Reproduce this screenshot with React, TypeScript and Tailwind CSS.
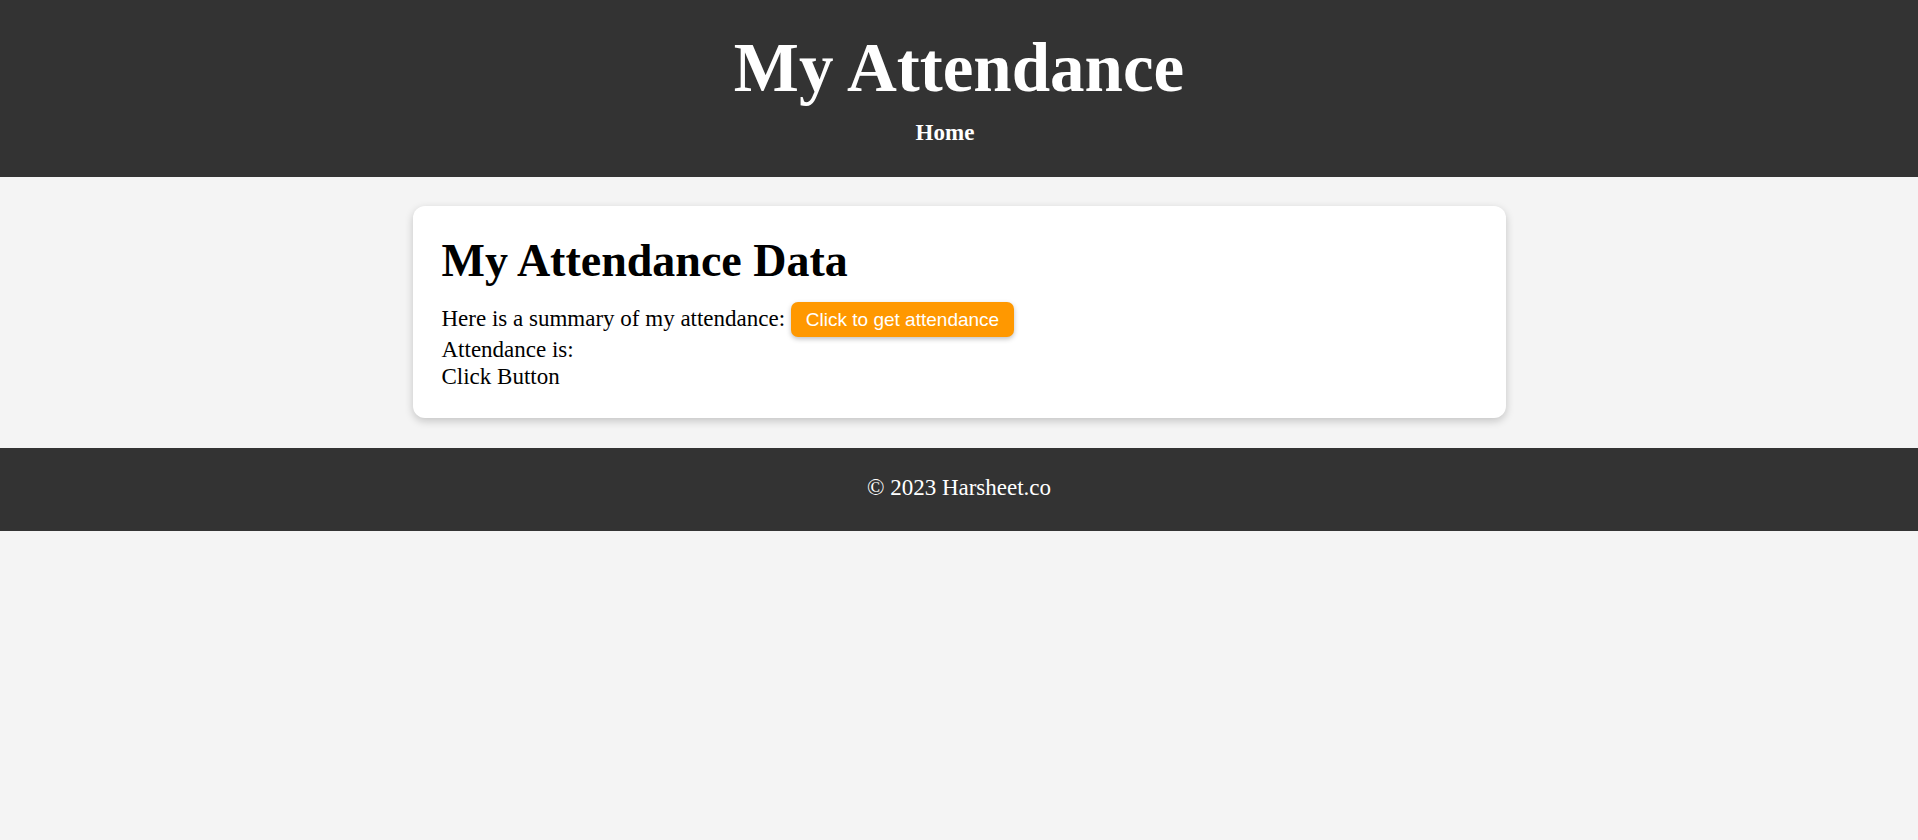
export default function App() {
  return (
    <div className="min-h-[840px] bg-[#f4f4f4] text-black" style={{ fontFamily: '"Liberation Serif", "Times New Roman", serif' }}>
      <header className="bg-[#333333] text-white pt-[28px] pb-[31px]">
        <h1 className="text-center text-[69px] font-bold leading-[80px]">My Attendance</h1>
        <nav className="mt-[12px] flex justify-center pr-[28px]">
          <a className="text-[23px] font-bold leading-[26px] text-white">Home</a>
        </nav>
      </header>

      <main className="pt-[29px] pb-[30px]">
        <div className="mx-auto w-[1093px] rounded-xl bg-white px-[29px] pt-[28px] pb-[28px] shadow-[0_3px_8px_rgba(0,0,0,0.2)]">
          <h2 className="text-[46px] font-bold leading-[53px]">My Attendance Data</h2>
          <p className="mt-[15px] text-[23px] leading-[26.5px]">
            Here is a summary of my attendance:{" "}
            <button
              className="inline-block rounded-[7px] bg-[#ff9800] px-[15px] pt-[7px] pb-[6px] text-[19px] leading-[22px] text-white shadow-[0_2px_5px_rgba(0,0,0,0.25)]"
              style={{ fontFamily: '"Liberation Sans", Arial, sans-serif' }}
            >
              Click to get attendance
            </button>
          </p>
          <p className="text-[23px] leading-[26.5px]">Attendance is:</p>
          <p className="text-[23px] leading-[26.5px]">Click Button</p>
        </div>
      </main>

      <footer className="bg-[#333333] pt-[27px] pb-[29.5px] text-center text-[23px] leading-[26.5px] text-white">
        © 2023 Harsheet.co
      </footer>
    </div>
  );
}
